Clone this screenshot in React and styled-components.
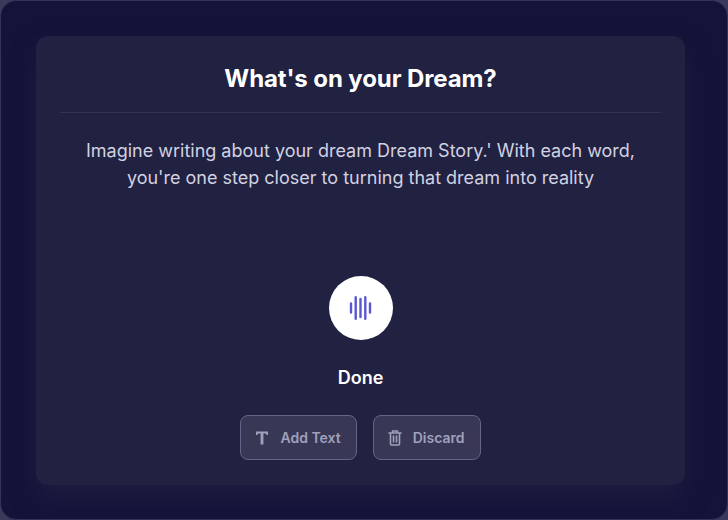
import React from 'react';
import styled, { createGlobalStyle } from 'styled-components';

const Global = createGlobalStyle`
html, body {
  margin: 0;
  padding: 0;
  background: #3a3a5c;
}
* {
  box-sizing: border-box;
}
`;

const Frame = styled.div`
width: 728px;
height: 520px;
padding: 35px 42px 34px 35px;
border: 1px solid #34345a;
border-radius: 16px;
background: #14143a;
font-family: Inter, "Liberation Sans", sans-serif;
`;

const Card = styled.section`
height: 100%;
display: flex;
flex-direction: column;
align-items: center;
padding: 0 24px;
border-radius: 12px;
background: #212142;
box-shadow: 0 14px 24px rgba(33, 33, 66, 0.6);
`;

const Title = styled.h1`
width: 100%;
margin: 0;
padding: 28px 0 19px;
border-bottom: 1px solid #323252;
color: #ffffff;
font-size: 24px;
font-weight: 700;
line-height: 29px;
letter-spacing: -0.1px;
text-align: center;
`;

const Intro = styled.p`
width: 100%;
margin: 0;
padding-top: 24px;
color: #d2d2e0;
font-size: 18px;
font-weight: 400;
line-height: 27px;
text-align: center;
`;

const RecordButton = styled.div`
width: 64px;
height: 64px;
margin-top: 85px;
display: flex;
align-items: center;
justify-content: center;
border-radius: 50%;
background: #ffffff;
`;

const Status = styled.div`
margin-top: 27px;
color: #ffffff;
font-size: 18px;
font-weight: 600;
line-height: 22px;
`;

const Actions = styled.div`
margin-top: 26px;
display: flex;
gap: 16px;
`;

const ActionButton = styled.button`
height: 45px;
display: flex;
align-items: center;
gap: 8px;
padding: 0 15px 0 11px;
border: 1px solid #64648a;
border-radius: 8px;
background: #383856;
color: #a0a0ba;
font-family: inherit;
font-size: 14px;
font-weight: 600;
`;

function WaveIcon() {
  return (
    <svg width="24" height="24" viewBox="0 0 24 24" fill="none" stroke="#5b57d1" strokeWidth="2.4" strokeLinecap="round">
      <path d="M2 7.5v9M6.7 1.2v21.6M11.5 3v18M16.3 1.2v21.6M21 7.5v9" />
    </svg>
  );
}

function TextIcon() {
  return (
    <svg width="20" height="20" viewBox="0 0 20 20" fill="#a0a0ba">
      <path d="M4 3.5h12v3.4h-1.4L14 5.4h-2.6v11.1H8.6V5.4H6l-.6 1.5H4z" />
    </svg>
  );
}

function TrashIcon() {
  return (
    <svg width="20" height="20" viewBox="0 0 20 20" fill="none" stroke="#a0a0ba" strokeWidth="1.6" strokeLinecap="round" strokeLinejoin="round">
      <path d="M4 5h12M7.5 5V3h5v2M5.5 5v11a1 1 0 0 0 1 1h7a1 1 0 0 0 1-1V5M8.5 8v6M11.5 8v6" />
    </svg>
  );
}

export default function App() {
  return (
    <>
      <Global />
      <Frame>
        <Card>
          <Title>What's on your Dream?</Title>
          <Intro>
            Imagine writing about your dream Dream Story.' With each word,
            <br />
            you're one step closer to turning that dream into reality
          </Intro>
          <RecordButton>
            <WaveIcon />
          </RecordButton>
          <Status>Done</Status>
          <Actions>
            <ActionButton>
              <TextIcon />
              Add Text
            </ActionButton>
            <ActionButton>
              <TrashIcon />
              Discard
            </ActionButton>
          </Actions>
        </Card>
      </Frame>
    </>
  );
}
